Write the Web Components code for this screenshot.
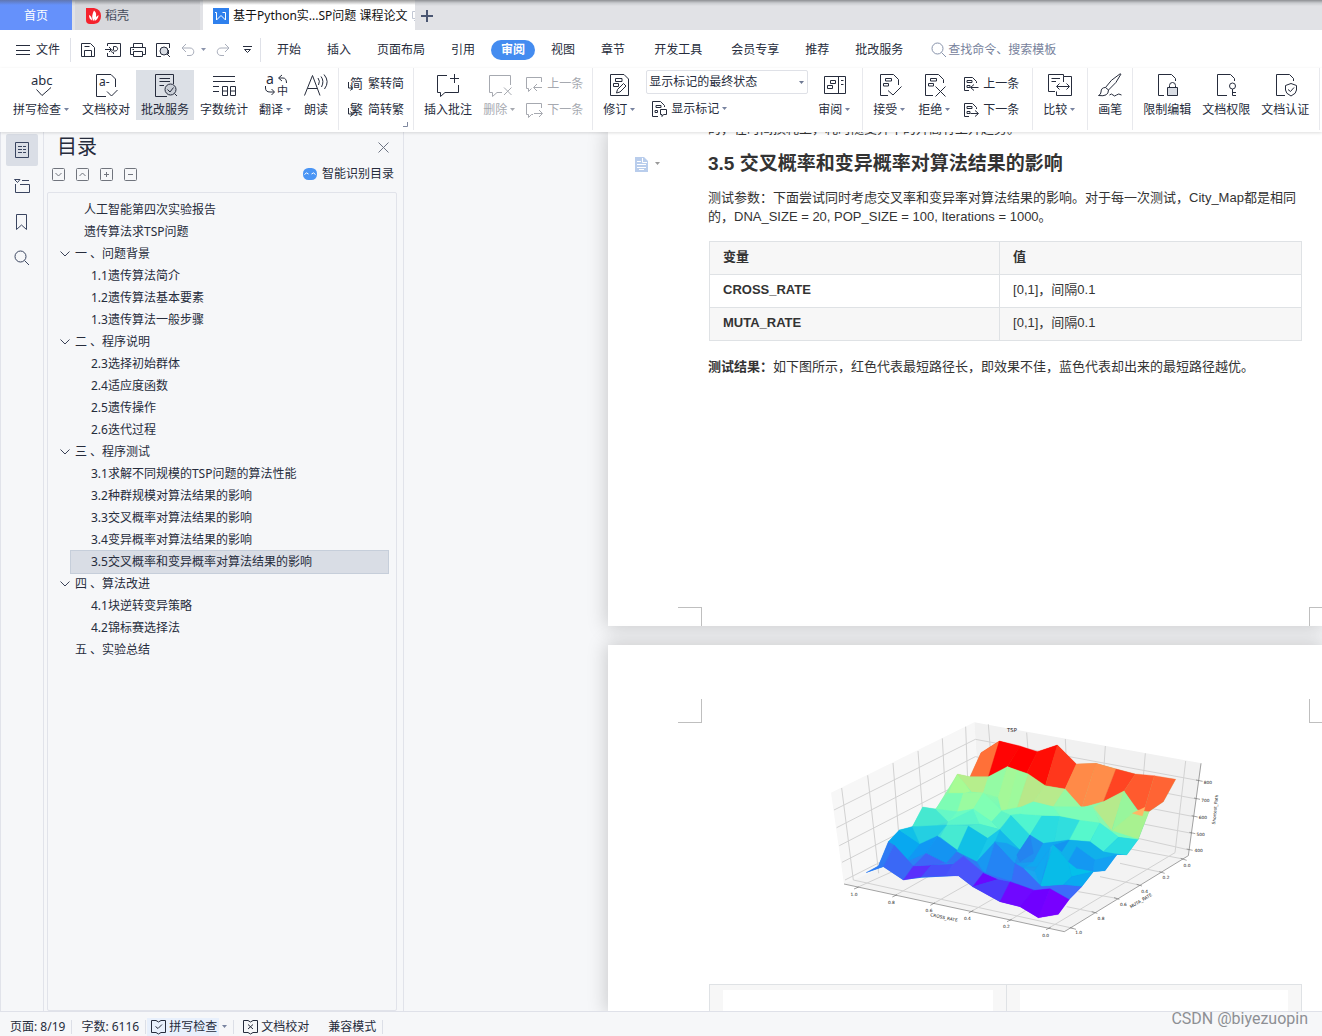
<!DOCTYPE html>
<html lang="zh-CN">
<head>
<meta charset="utf-8">
<title>基于Python实...SP问题 课程论文</title>
<style>
html,body{margin:0;height:100%}
body{font:12px/16px "Noto Sans","Noto Sans CJK SC",sans-serif;color:#262c3c;background:#f6f7f9}
</style>
</head>
<body>
<writer-app></writer-app>
<script>
const RESET=`*{box-sizing:border-box}button,input,select{font:inherit;color:inherit;background:none;border:0;margin:0;padding:0;outline:0}button{white-space:nowrap;cursor:pointer}svg{display:block;flex:none;overflow:visible}`;
function define(name,css,html,after){
  const t=document.createElement('template');
  t.innerHTML=`<style>${RESET}${css}</style>${html}`;
  customElements.define(name,class extends HTMLElement{
    constructor(){super();this.attachShadow({mode:'open'}).append(t.content.cloneNode(true));}
    connectedCallback(){if(after)after(this,this.shadowRoot);}
  });
}

/* name: [width, height, markup] */
const SMALLREV='<path d="M6 14.500H1.500V1.500H9.500L13.500 5.500V7M4 4.500H9V6.500H4ZM4 9.500H7V11.500H4Z"/>';
const ICONS={
 menu:[14,12,'<path d="M0 1.500H14M0 6.500H14M0 10.500H14"/>'],
 save:[16,16,'<path d="M1.500 14.500V1.500H10.500L14.500 5.500V14.500H1.500M4.500 14.500V8.500H11.500V14.500M4.500 4.500H9.500"/>'],
 exportp:[16,16,'<path d="M2.500 4V1.500H15.500V14.500H2.500V11M0 7.500H6M4 5L6.500 7.500 4 10M8.500 12V10.500C5 10.500 6.500 8 8.500 8V4.500H10C13.500 4.500 13.500 9 10 9H8.500"/>'],
 print:[16,16,'<path d="M3.500 5V1.500H12.500V5M3.500 12.500H.5V5.500H15.500V12.500H12.500M3.500 9.500H12.500V14.500H3.500ZM2.500 7.500H4"/>'],
 preview:[16,16,'<path d="M6 14.500H1.500V1.500H14.500V6"/><circle cx="9" cy="9" r="4" fill="#d9dde4"/><path d="M12 12L15 15M13.500 8V12"/>'],
 undo:[14,14,'<path d="M5 1L1 5 5 9M1 5H9C14 5 14 12.500 9 12.500H6"/>'],
 redo:[14,14,'<path d="M9 1L13 5 9 9M13 5H5C0 5 0 12.500 5 12.500H8"/>'],
 more:[9,9,'<path d="M0 1.500H9M1.500 4.500L4.500 7.500 7.500 4.500Z"/>'],
 search:[16,16,'<circle cx="6.500" cy="6.500" r="5.500"/><path d="M10.500 10.500L15 15"/>'],
 caret:[5,4,'<path d="M0 0H5L2.500 3Z" fill="currentColor" stroke="none"/>'],
 chev:[10,6,'<path d="M.5 .5L5 5 9.500 .5"/>'],
 abc:[24,24,'<text x="1" y="12" font-size="13">abc</text><path d="M6.500 16.500L12 22.500 21 14.500"/>'],
 proof:[24,24,'<path d="M12 23.500H2.500V1.500H17L21.500 6V14M13 18.500L17.500 23 23.500 17"/><text x="5" y="13" font-size="12">a-</text>'],
 service:[26,24,'<path d="M15 23.500H3.500V1.500H21.500V11M7.500 5.500H18M7.500 8.500H18M7.500 12.500H12"/><circle cx="18.500" cy="16.500" r="5.500" fill="#c9ced6"/><path d="M15.500 16.500L18 19 21.500 14.500M22.500 20.500L25 23"/>'],
 count:[24,24,'<path d="M1 3.500H23M1 8.500H23M1 13.500H7M1 18.500H7M10.500 13.500H15.500V22.500H10.500ZM10.500 18H15.500M18.500 13.500H23.500V22.500H18.500ZM18.500 18H23.500"/>'],
 trans:[24,24,'<text x="2" y="11" font-size="14">a</text><text x="13" y="22" font-size="11">中</text><path d="M18 2L14.500 5 18 8M15 5H19Q22.500 5 22.500 10M1.500 13V15Q1.500 19 6 19H10M7.500 16L10.500 19 7.500 22"/>'],
 read:[24,24,'<path d="M.5 22.500L8.500 2.500 16 22.500M3.500 15.500H13.500M14 5Q16.500 8 14.500 12M17 3.500Q20.500 8 17.500 14M20 1.500Q26 8.500 20.500 16"/>'],
 jian:[17,16,'<text x="3" y="12" font-size="13">简</text><path d="M1.500 6V12H5M3.500 9.500L5.500 12 3.500 14.500"/>'],
 fan:[17,16,'<text x="3" y="12" font-size="13">繁</text><path d="M1.500 6V12H5M3.500 9.500L5.500 12 3.500 14.500"/>'],
 addnote:[24,24,'<path d="M11 2.500H1.500V19.500H4.500V23.500L9 19.500H22.500V12M18.500 1V10M14 5.500H23"/>'],
 delnote:[24,24,'<path d="M22.500 12V2.500H1.500V19.500H4.500V23.500L9 19.500H14M16 14.500L23.500 22M23.500 14.500L16 22"/>'],
 prevnote:[17,16,'<path d="M15.500 6V1.500H.5V12.500H2.500V15.500L5.500 12.500M16 11.500H8M11 8L7.500 11.500 11 15"/>'],
 nextnote:[17,16,'<path d="M15.500 6V1.500H.5V12.500H2.500V15.500L5.500 12.500H7M8 11.500H16M13 8L16.500 11.500 13 15"/>'],
 track:[24,24,'<path d="M2.500 1.500H16L20.500 6V22.500H2.500ZM7.500 5.500H14V8.500H7.500ZM5.500 10.500H10.500V13.500H5.500ZM8.500 20L9.500 16.500 15.500 10.500 18 13 12 19Z"/>'],
 showmark:[16,16,'<path d="M7 15.500H1.500V.5H9.500L13.500 4.500V6M5 4.500H10V6.500H5ZM4 9.500H6.500V11.500H4ZM9.500 8.500H15.500V13.500H12.500L11 15.500V13.500H9.500Z"/>'],
 pane:[24,24,'<path d="M1.500 3.500H22.500V20.500H1.500ZM15.500 3.500V20.500M7.500 7.500H12.500V10.500H7.500ZM4.500 12.500H9.500V15.500H4.500ZM18 7.500H20.500M18 11.500H20.500"/>'],
 accept:[24,24,'<path d="M10 22.500H2.500V1.500H15.500L20.500 6.500V12M7.500 5.500H13.500V8H7.500ZM5.500 10.500H10.500V13H5.500ZM10 17.500L15 22 23.500 13.500"/>'],
 reject:[24,24,'<path d="M10 22.500H2.500V1.500H15.500L20.500 6.500V10M7.500 5.500H13.500V8H7.500ZM5.500 10.500H10.500V13H5.500ZM12.500 13.500L22.500 23.500M22.500 13.500L12.500 23.500"/>'],
 prevrev:[16,16,SMALLREV+'<path d="M15.500 11.500H8M11 8.500L7.500 11.500 11 14.500"/>'],
 nextrev:[16,16,SMALLREV+'<path d="M7.500 11.500H15M12 8.500L15.500 11.500 12 14.500"/>'],
 compare:[26,24,'<path d="M8 18.500H1.500V1.500H16.500V3.500M16.500 3.500H24.500V22.500H9.500V18.500M4.500 5.500H13M4.500 8.500H9M10 13.500H22M12.500 10.500L9.500 13.500 12.500 16.500M19.500 10.500L22.500 13.500 19.500 16.500M16.500 3.500V9"/>'],
 brush:[24,24,'<path d="M22.500 .5Q12 7 7.500 14.500L10.500 17Q19 10 23 1M7.500 14.500Q3 14.500 3 19Q3 21.500 .5 22.500Q10.500 24 10.500 17M11.500 22Q13.500 20 15 22T18.500 22T23.500 22"/>'],
 lock:[24,24,'<path d="M9 22.500H3.500V1.500H16.500L20.500 5.500V8M14.500 14V12.500Q14.500 9.500 17.500 9.500T20.500 12.500V14"/><path fill="#d9dde4" d="M12.500 14.500H22.500V22.500H12.500Z"/>'],
 key:[24,24,'<path d="M13 22.500H3.500V1.500H16.500L20.500 5.500V8M18.500 16V22.500H22M18.500 19.500H22"/><circle cx="18.500" cy="13" r="3"/>'],
 shield:[24,24,'<path d="M12 22.500H3.500V1.500H16.500L20.500 5.500V8M18 10.500L23.500 12.500V17Q23.500 20.500 18 23Q12.500 20.500 12.500 17V12.500ZM15 16.500L17.500 18.500 21 14.500"/>'],
 corner:[5,5,'<path d="M4.500 0V4.500H0"/>'],
 outline:[16,16,'<path d="M1.500 .5H14.500V15.500H1.500ZM4 4.500H8M9 4.500H12M4 7.500H8M9 7.500H12M4 10.500H8M9 10.500H12"/>'],
 chapter:[16,16,'<path d="M.5 1.500H6L3.500 4.500ZM8 2.500H15M1.500 6V14.500H15.500V6.500H6"/>'],
 bookmark:[16,16,'<path d="M2.500 .5H12.500V15.500L7.500 11 2.500 15.500Z"/>'],
 close:[11,11,'<path d="M.5 .5L10.500 10.500M10.500 .5L.5 10.500"/>'],
 boxdown:[13,13,'<rect x=".5" y=".5" width="12" height="12" rx="1"/><path d="M3.500 5L6.500 8 9.500 5"/>'],
 boxup:[13,13,'<rect x=".5" y=".5" width="12" height="12" rx="1"/><path d="M3.500 8L6.500 5 9.500 8"/>'],
 boxplus:[13,13,'<rect x=".5" y=".5" width="12" height="12" rx="1"/><path d="M4 6.500H9M6.500 4V9"/>'],
 boxminus:[13,13,'<rect x=".5" y=".5" width="12" height="12" rx="1"/><path d="M4 6.500H9"/>'],
 robot:[14,12,'<rect width="14" height="12" rx="5.500" fill="#4a95f5" stroke="none"/><path stroke="#fff" d="M1.500 6.500Q3.500 3.500 5.500 6M8.500 6Q10.500 3.500 12.500 6.500"/>'],
 docfile:[13,15,'<path d="M0 0H9L13 4V15H0Z" fill="#b9cdec" stroke="none"/><path stroke="#fff" d="M2 4.500H6M2 7.500H11M2 10.500H11M7.500 1V5.500H12M4 12.500H9"/>'],
 spellbook:[15,15,'<path d="M5 1.500H.5V13.500H5L7.500 15 10 13.500H14.500V1.500H10L7.500 3 5 1.500M4.500 7.500L7 9.500 11 5.500"/>'],
 proofbook:[15,15,'<path d="M5 1.500H.5V13.500H5L7.500 15 10 13.500H14.500V1.500H10L7.500 3 5 1.500M5 5.500L10 10M10 5.500L5 10"/>'],
 plus:[12,12,'<path d="M6 0V12M0 6H12" stroke-width="2"/>'],
 docer:[15,16,'<path d="M0 0H8Q15 1 15 8T8 16H4Q0 16 0 12Z" fill="#f5222d" stroke="none"/><path fill="#fff" stroke="none" d="M8 2.500Q12 6 9 11L7 13Q5 8 8 2.500M3 7Q6 8 6 12.500Q3 11 3 7M12.500 7Q12.500 11 8.500 13Q9 9 12.500 7"/>'],
 wps:[16,16,'<rect width="16" height="16" fill="#2f80ed" stroke="none"/><path stroke="#fff" d="M2 4.500H3.500V12L8 7.500 12.500 12V4.500H9.500"/>'],
 ghost:[5,10,'<path d="M5 .5H1.500V7.500H5M3 9.500H5"/>']
};
define('ui-icon',':host{display:block;flex:none}svg text{fill:currentColor;stroke:none}','<svg fill="none" stroke="currentColor" aria-hidden="true"></svg>',(el,r)=>{
  const [w,h,m]=ICONS[el.getAttribute('name')],s=r.querySelector('svg');
  s.setAttribute('width',w);s.setAttribute('height',h);s.setAttribute('viewBox',`0 0 ${w} ${h}`);s.innerHTML=m;
});

define('tab-strip',`
:host{display:flex;height:30px;background:linear-gradient(#8d8f93,#c9cbcf 3px,#e1e2e6 6px);align-items:stretch}
button{display:flex;align-items:center;padding-top:2px}
.home{width:72px;justify-content:center;background:linear-gradient(#6076b0,#6591fb 5px);color:#fff;margin-right:3px}
.docer{width:125px;padding-left:11px;gap:4px;background:linear-gradient(#8d8f93,#d7d8dc 5px);color:#444a5a;margin-right:3px}
.doc{width:212px;padding-left:10px;gap:4px;background:linear-gradient(#999,#fff 5px);color:#111;overflow:hidden}
.doc ui-icon:last-child{color:#c3c8d4}
.new{padding-left:6px;color:#4a5672}`,
`<button class="home">首页</button><button class="docer"><ui-icon name="docer"></ui-icon>稻壳</button><button class="doc"><ui-icon name="wps"></ui-icon>基于Python实...SP问题 课程论文<ui-icon name="ghost"></ui-icon></button><button class="new" aria-label="新建"><ui-icon name="plus"></ui-icon></button>`);

define('menu-bar',`
:host{display:flex;height:38px;background:#fff;align-items:center;padding:1px 0 0 16px}
.file{display:flex;gap:6px;align-items:center;padding-right:10px}
.sep{width:1px;height:24px;background:#dfe1e8}
.quick{display:flex;align-items:center;gap:9px;padding:0 8px 0 9px}
.quick button.dim{color:#a9aebb}
.quick .more{margin-left:4px}
.undo{display:flex;align-items:center;gap:6px;margin:0 1px}
.undo ui-icon+ui-icon{color:#8a93ab}
nav{display:flex;align-items:center;margin-left:3px}
nav button{height:20px;padding:0 10px;margin:0 3px;line-height:20px}
nav .wide{margin:0 3px 0 6px}
nav .on{background:#448cf0;color:#fff;font-weight:bold;border-radius:10px}
label{display:flex;align-items:center;gap:1px;margin-left:15px;color:#8893ab;flex:1}
input{flex:1;min-width:108px}
input::placeholder{color:#77829c;opacity:1}`,
`<button class="file"><ui-icon name="menu"></ui-icon>文件</button><span class="sep"></span>
<div class="quick"><button aria-label="保存"><ui-icon name="save"></ui-icon></button><button aria-label="输出"><ui-icon name="exportp"></ui-icon></button><button aria-label="打印"><ui-icon name="print"></ui-icon></button><button aria-label="预览"><ui-icon name="preview"></ui-icon></button><button class="dim undo" aria-label="撤销"><ui-icon name="undo"></ui-icon><ui-icon name="caret"></ui-icon></button><button class="dim" aria-label="恢复"><ui-icon name="redo"></ui-icon></button><button class="more" aria-label="更多"><ui-icon name="more"></ui-icon></button></div><span class="sep"></span>
<nav><button>开始</button><button>插入</button><button>页面布局</button><button>引用</button><button class="on">审阅</button><button>视图</button><button>章节</button><button class="wide">开发工具</button><button class="wide">会员专享</button><button>推荐</button><button>批改服务</button></nav>
<label><ui-icon name="search"></ui-icon><input type="text" aria-label="查找命令、搜索模板" placeholder="查找命令、搜索模板"></label>`);

define('ribbon-button',`
:host{display:block}
button{display:flex;flex-direction:column;align-items:center;gap:5px;height:50px;padding:3px 5px 0}
:host([active]) button{background:#dce0e6}
:host([disabled]){color:#a6a9b0}
.l{display:flex;align-items:center;gap:3px}
.l ui-icon{display:none;color:#7883a0;margin-right:2px}
:host([drop]) .l ui-icon{display:block}
:host([small]) button{flex-direction:row;gap:4px;height:26px;padding:0}
:host([disabled]) .l ui-icon{color:#a6a9b0}`,
`<button><ui-icon class="i" name="caret"></ui-icon><span class="l"><slot></slot><ui-icon name="caret"></ui-icon></span></button>`,
(el,r)=>{const n=document.createElement('ui-icon');n.setAttribute('name',el.getAttribute('icon'));r.querySelector('.i').replaceWith(n);if(el.hasAttribute('disabled'))r.querySelector('button').disabled=true;});

define('ribbon-group',`:host{display:flex;gap:1px;padding:2px 5px 0;height:62px;border-right:1px solid #e8e9ed;position:relative;flex:none}
ui-icon{display:none}:host([launcher]) ui-icon{display:block;position:absolute;right:5px;bottom:3px;color:#7f889f}`,`<slot></slot><ui-icon name="corner"></ui-icon>`);
define('ribbon-stack',`:host{display:flex;flex-direction:column;padding:1px 4px 0 3px}:host([wide]){padding:1px 8px 0 5px}`,`<slot></slot>`);
define('mark-select',`:host{display:flex;flex-direction:column;padding:0 4px 0 3px}
.box{position:relative;height:24px;display:flex;align-items:center}
select{appearance:none;width:162px;height:24px;border:1px solid #dfe1e7;border-radius:2px;padding-left:2px;background:#fff}
.box ui-icon{position:absolute;right:4px;top:11px;color:#6e7993}
.low{padding:2px 0 0 5px}`,
`<div class="box"><select aria-label="显示标记状态"><option>显示标记的最终状态</option></select><ui-icon name="caret"></ui-icon></div><div class="low"><slot></slot></div>`);

define('ribbon-bar',`:host{display:flex;height:64px;background:#fff;padding-left:3px;overflow:hidden;position:relative;z-index:2;box-shadow:0 1px 3px #0002;flex:none}`,
`<ribbon-group><ribbon-button icon="abc" drop>拼写检查</ribbon-button><ribbon-button icon="proof">文档校对</ribbon-button><ribbon-button icon="service" active>批改服务</ribbon-button><ribbon-button icon="count">字数统计</ribbon-button><ribbon-button icon="trans" drop>翻译</ribbon-button><ribbon-button icon="read">朗读</ribbon-button></ribbon-group>
<ribbon-group launcher><ribbon-stack><ribbon-button icon="jian" small>繁转简</ribbon-button><ribbon-button icon="fan" small>简转繁</ribbon-button></ribbon-stack></ribbon-group>
<ribbon-group><ribbon-button icon="addnote">插入批注</ribbon-button><ribbon-button icon="delnote" drop disabled>删除</ribbon-button><ribbon-stack><ribbon-button icon="prevnote" small disabled>上一条</ribbon-button><ribbon-button icon="nextnote" small disabled>下一条</ribbon-button></ribbon-stack></ribbon-group>
<ribbon-group><ribbon-button icon="track" drop>修订</ribbon-button><mark-select><ribbon-button icon="showmark" small drop>显示标记</ribbon-button></mark-select><ribbon-button icon="pane" drop>审阅</ribbon-button></ribbon-group>
<ribbon-group><ribbon-button icon="accept" drop>接受</ribbon-button><ribbon-button icon="reject" drop>拒绝</ribbon-button><ribbon-stack wide><ribbon-button icon="prevrev" small>上一条</ribbon-button><ribbon-button icon="nextrev" small>下一条</ribbon-button></ribbon-stack></ribbon-group>
<ribbon-group><ribbon-button icon="compare" drop>比较</ribbon-button></ribbon-group>
<ribbon-group><ribbon-button icon="brush">画笔</ribbon-button></ribbon-group>
<ribbon-group><ribbon-button icon="lock">限制编辑</ribbon-button><ribbon-button icon="key">文档权限</ribbon-button><ribbon-button icon="shield">文档认证</ribbon-button></ribbon-group>`);

define('side-rail',`:host{display:flex;flex-direction:column;gap:4px;width:44px;padding:2px 0 0 5px;border:solid #e1e3ea;border-width:0 1px;flex:none;color:#3a4560}
button{width:32px;height:32px;display:flex;align-items:center;justify-content:center;border-radius:2px}
.on{background:#dadee6}`,
`<button class="on" aria-label="目录"><ui-icon name="outline"></ui-icon></button><button aria-label="章节"><ui-icon name="chapter"></ui-icon></button><button aria-label="书签"><ui-icon name="bookmark"></ui-icon></button><button aria-label="查找"><ui-icon name="search"></ui-icon></button>`);

define('toc-item',`:host{display:block;height:22px}
button{display:flex;align-items:center;width:100%;height:22px;gap:5px;padding-left:12px;text-align:left}
ui-icon{visibility:hidden;color:#3a4257}
:host([open]) ui-icon{visibility:visible}
:host([level="0"]) ui-icon,:host([level="2"]) ui-icon{display:none}
:host([level="0"]) button{padding-left:36px}
:host([level="2"]){margin:0 8px 0 23px}
:host([level="2"]) button{padding-left:20px}
:host([selected]) button{background:#d9dde5;outline:1px solid #c6ceda}`,
`<button><ui-icon name="chev"></ui-icon><span><slot></slot></span></button>`);

define('toc-panel',`:host{display:flex;flex-direction:column;width:360px;border-right:1px solid #e1e3ea;padding:0 6px 0 3px;flex:none}
header{display:flex;justify-content:space-between;align-items:center;height:30px;padding:0 8px 0 10px}
h2{font-size:20px;line-height:30px;font-weight:normal;margin:0}
header ui-icon{color:#6c7383}
.tools{display:flex;align-items:center;gap:11px;height:24px;padding:0 3px 0 5px;color:#70747d;margin-bottom:6px}
.smart{margin-left:auto;display:flex;align-items:center;gap:5px;color:#262c3c}
.list{flex:1;min-height:0;overflow:hidden;border:1px solid #e1e3ea;border-radius:2px;padding-top:6px}`,
`<header><h2>目录</h2><button aria-label="关闭"><ui-icon name="close"></ui-icon></button></header>
<div class="tools"><button aria-label="展开"><ui-icon name="boxdown"></ui-icon></button><button aria-label="收起"><ui-icon name="boxup"></ui-icon></button><button aria-label="增加"><ui-icon name="boxplus"></ui-icon></button><button aria-label="减少"><ui-icon name="boxminus"></ui-icon></button><button class="smart"><ui-icon name="robot"></ui-icon>智能识别目录</button></div>
<div class="list">
<toc-item level="0">人工智能第四次实验报告</toc-item><toc-item level="0">遗传算法求TSP问题</toc-item>
<toc-item level="1" open>一 、问题背景</toc-item><toc-item level="2">1.1遗传算法简介</toc-item><toc-item level="2">1.2遗传算法基本要素</toc-item><toc-item level="2">1.3遗传算法一般步骤</toc-item>
<toc-item level="1" open>二 、程序说明</toc-item><toc-item level="2">2.3选择初始群体</toc-item><toc-item level="2">2.4适应度函数</toc-item><toc-item level="2">2.5遗传操作</toc-item><toc-item level="2">2.6迭代过程</toc-item>
<toc-item level="1" open>三 、程序测试</toc-item><toc-item level="2">3.1求解不同规模的TSP问题的算法性能</toc-item><toc-item level="2">3.2种群规模对算法结果的影响</toc-item><toc-item level="2">3.3交叉概率对算法结果的影响</toc-item><toc-item level="2">3.4变异概率对算法结果的影响</toc-item><toc-item level="2" selected>3.5交叉概率和变异概率对算法结果的影响</toc-item>
<toc-item level="1" open>四 、算法改进</toc-item><toc-item level="2">4.1块逆转变异策略</toc-item><toc-item level="2">4.2锦标赛选择法</toc-item><toc-item level="1">五 、实验总结</toc-item>
</div>`);

/* Facets of the surface, back to front */
const FACETS=`ff7038 450,200 483,128 538,93 505,200
ff0404 505,200 538,93 600,108 562,170
ff0000 562,170 600,108 652,125 620,190
ff0d05 652,125 712,105 676,227 620,190
ff371c 712,105 769,162 735,237 676,227
ff8a48 769,162 828,160 785,293 735,237
ff8d4a 828,160 888,177 850,275 785,293
ff4422 888,177 946,192 912,243 850,275
ff5a2e 946,192 1003,197 967,318 912,243
ff6434 1003,197 1067,208 1030,275 967,318
a8fb94 412,192 450,244 430,250 385,250
b6ee8c 412,192 450,200 505,200 490,248 455,245
7dfcb4 385,250 430,250 412,305 347,297
9afba0 430,250 490,248 460,297 412,305
80ffb4 490,248 545,302 515,335 460,297
94fba4 505,200 562,170 535,262 490,248
9efa9c 562,170 625,192 590,298 545,302 535,262
a4f898 562,170 590,182 560,300 545,302 535,262
b8e88a 625,192 676,227 640,275 590,298
b8ea8c 676,227 735,237 700,290 640,275
96f8a2 735,237 785,293 700,290
8efaa8 785,293 850,275 818,300 700,290
b6ea8c 850,275 912,243 875,362 818,295
98f69c 912,243 950,300 895,350 875,362
a8f290 950,300 987,305 955,388 895,380 875,362
ffb664 937,310 975,292 967,318
46e8d0 308,291 347,297 385,330 330,358 277,350
66f8c6 347,297 412,305 385,335
6cfcc2 412,305 460,297 385,335
5cf5ca 385,335 460,297 478,342 380,345
3adcdc 330,358 380,345 360,380 300,402
46ead2 380,345 445,348 415,423 360,380
6afcc4 460,297 515,335 538,358 478,342
4aecd0 445,348 478,342 538,358 503,385
5ef5c6 515,335 545,302 573,315 538,358
72fdbe 545,302 605,290 605,312 573,315
26d8e0 573,315 630,375 600,420 540,360
50f5d0 573,315 605,312 665,318 630,375
2adce0 665,318 720,318 700,405 690,415 630,375
30dede 720,318 780,330 748,390 700,405
56f8cc 780,330 840,338 810,395 748,390
46f0d8 840,338 897,380 850,425 810,395
2adce0 897,380 955,388 920,435 850,425
70fdc0 605,290 640,275 700,290 720,318 605,312
7cfcb8 700,290 818,290 840,338 780,330 720,318
88f8b0 818,290 875,362 897,380 840,338
74fcba 875,362 955,388 897,380
08a8f0 238,360 300,402 255,458 222,405 205,395
10c0e8 238,360 277,350 330,358 300,402
24cfe2 277,350 380,345 352,378 300,402
1098f4 300,402 352,378 318,430 255,458
1494f2 352,378 415,423 378,460 318,430
10c0e6 445,348 503,385 470,455 410,425
18c8e8 503,385 540,358 560,400 525,395 470,455
14b8ea 540,360 600,420 575,425 525,395
1898f2 470,455 525,395 497,490
2484f4 525,395 585,460 575,515 497,490
18a0f0 560,400 600,420 585,460 525,395
2090f0 600,420 630,375 670,400 640,455 585,460
2484f0 630,375 640,430 600,455 590,435
10a8f0 670,400 745,390 700,405 690,415 660,530 610,475 640,455
1ca0ee 640,485 690,415 650,470 610,470
10b0ea 748,390 810,395 850,425 890,435 825,450 770,410 745,455 700,405
1494f0 700,405 748,390 725,425
08bce8 700,405 745,455 755,500 730,525 660,530
04c0ea 745,455 770,475 820,485 755,500
1498f2 745,455 770,410 825,450 815,480 770,475
14a0f2 825,450 890,435 855,482 820,485
0aaaf0 730,525 755,500 820,485 785,530
1aa8f0 610,475 645,485 660,530
2f7af4 138,488 175,468 205,395 222,405 190,470
2a84f4 222,405 255,458 318,430 280,468
3a68f6 222,405 280,468 250,510 190,470
5a30fc 280,468 335,465 305,500 250,510
3e66f8 318,430 378,460 335,465 280,468
4650fa 335,465 400,462 378,495 415,497 305,500
2f78f4 378,460 410,425 430,438 400,462
2f7cf4 410,425 470,455 490,488 430,438
4a54fa 430,438 490,488 458,530 415,497 378,495 400,462
6a08ff 490,488 535,508 458,530
4a3cfa 458,530 535,508 570,515 540,575
3a6cf8 490,488 575,515 535,508
386ef8 585,460 610,475 665,530 640,540 575,515
7008ff 570,515 640,540 600,590 540,575
7000ff 640,540 690,535 655,623 600,590
7800ff 690,535 748,568 715,613 655,623
3c6cfa 640,540 660,530 730,525 785,530 748,568 690,535`;
const line=(a)=>a.map(p=>`M${p[0]} ${p[1]}L${p[2]} ${p[3]}`).join('');
const label=(a)=>a.map(p=>`<text x="${p[1]}" y="${p[2]+5}">${p[0]}</text>`).join('');
define('surface-plot',`:host{display:block}text{font:13px "DejaVu Sans",sans-serif;fill:#222;text-anchor:middle}`,
`<svg width="410" height="240" viewBox="0 0 1230 720" role="img" aria-label="TSP">
<defs><linearGradient id="g" x1="0" y1="93" x2="0" y2="623" gradientUnits="userSpaceOnUse"><stop offset="0" stop-color="#f20"/><stop offset=".22" stop-color="#a0f898"/><stop offset=".4" stop-color="#70fcc0"/><stop offset=".55" stop-color="#18c0e8"/><stop offset=".72" stop-color="#1898f2"/><stop offset="1" stop-color="#7000ff"/></linearGradient></defs>
<path fill="#f7f7f7" d="M33 248L463 37 485 395 72 522Z"/><path fill="#f1f1f1" d="M463 37L1145 160 1105 437 485 380Z"/><path fill="#f3f3f3" d="M72 522L480 350 1105 437 733 665Z"/>
<path fill="none" stroke="#d2d2d2" stroke-width="3" d="${line([[65,234,100,510],[143,196,176,490],[219,159,244,470],[294,123,318,440],[367,85,385,420],[437,50,450,400],[42,300,466,88],[50,353,466,140],[58,407,470,195],[66,457,470,250],[75,510,470,310],[466,88,1138,212],[466,140,1130,267],[600,220,1122,320],[700,290,1115,370],[800,350,1108,420],[505,43,512,130],[620,68,624,120],[736,87,738,130],[856,108,852,170],[976,130,970,200],[1097,153,1065,428],[110,533,250,470],[224,557,360,480],[338,582,500,490],[453,605,600,520],[568,632,700,550],[685,655,1065,428],[100,510,760,655],[823,607,740,590],[890,565,775,545],[958,525,840,500],[1025,487,900,460],[1090,447,920,415]])}"/>
<path fill="none" stroke="#777" stroke-width="2" d="M72 522L733 665 1105 437 1143 160${line([[102,537,116,531],[217,561,231,554],[331,586,345,578],[446,609,460,601],[561,635,575,628],[678,659,692,652],[750,653,768,658],[815,605,832,610],[882,563,898,568],[950,523,966,528],[1018,485,1034,490],[1082,445,1100,451],[1128,210,1148,214],[1122,264,1140,268],[1115,317,1133,321],[1108,367,1126,371],[1100,417,1118,421]])}"/>
<path fill="url(#g)" d="M138 488L175 468 205 395 238 360 277 350 308 291 347 297 412 192 450 200 483 128 538 93 652 125 712 105 769 162 828 160 946 192 1067 208 1030 275 987 305 955 388 920 435 890 435 855 482 820 485 785 530 748 568 715 613 655 623 600 590 540 575 458 530 415 497 305 503 250 510 190 470Z"/>
${FACETS.split('\n').map(l=>{const i=l.indexOf(' '),c='#'+l.slice(0,i);return `<polygon points="${l.slice(i+1)}" fill="${c}" stroke="${c}"/>`}).join('')}
${label([['1.0',102,552],['0.8',214,576],['0.6',327,600],['0.4',442,625],['0.2',559,650],['0.0',677,676],['0.0',1101,465],['0.2',1038,503],['0.4',974,543],['0.6',910,583],['0.8',843,625],['1.0',776,667],['800',1164,216],['700',1156,270],['600',1149,322],['500',1142,373],['400',1136,422]])}
<text x="576" y="67" style="font-size:16px">TSP</text><text transform="translate(371 627) rotate(12)">CROSS_RATE</text><text transform="translate(965 576) rotate(-31)">MUTA_RATE</text><text transform="translate(1190 299) rotate(-84)">Shortest_Path</text></svg>`);

define('crop-marks',`:host{display:flex;justify-content:space-between;height:24px;padding-left:70px;flex:none}
i{border:0 solid #bfbfbf;width:24px}
.l{border-right-width:1px}.r{width:13px;border-left-width:1px}
:host([at=top]) i{border-bottom-width:1px}
:host([at=bottom]){height:19px}
:host([at=bottom]) i{border-top-width:1px}`,`<i class="l"></i><i class="r"></i>`);

define('doc-page',`:host{display:flex;flex-direction:column;background:#fff;box-shadow:0 0 18px 2px #0000002e}`,`<slot></slot>`);

define('doc-canvas',`:host{display:flex;flex-direction:column;gap:19px;flex:1;min-width:0;overflow:hidden;padding-left:204px;font-family:"Liberation Sans","Noto Sans CJK SC",sans-serif;font-size:13px;line-height:19px;color:#333}
.first{height:494px;flex:none}
.second{flex:1;padding-top:54px;min-height:0}
.text{flex:1;padding:0 20px 0 100px}
p{margin:0}
.cut{margin-top:-13px}
.head{display:flex;align-items:center;margin:14px 0 12px -73px}
.tag{display:flex;align-items:center;gap:7px;width:73px;color:#999}
h3{margin:0;font-size:19px;line-height:24px}
table{border-collapse:collapse;width:calc(100% - 1px);margin:15px 0 16px 1px;table-layout:fixed}
th,td{border:1px solid #dfe2e5;height:33px;padding:0 13px 3px;text-align:left}
th:first-child{width:49%}
tr:nth-child(odd){background:#f7f7f7}
surface-plot{margin:-13px 0 0 212px}
.pics{display:grid;grid-template-columns:1fr 1fr;margin:34px 20px 0 101px;border:1px solid #dfe2e5;border-bottom:0;background:#f7f7f7;flex:1;min-height:0}
.pics div{padding:5px 13px 0;display:flex}
.pics div+div{border-left:1px solid #dfe2e5}
.pics i{flex:1;background:#fff}`,
`<doc-page class="first"><div class="text"><p class="cut">的，在时间损耗上，耗时随变异率的升高有上升趋势。</p>
<div class="head"><span class="tag"><ui-icon name="docfile"></ui-icon><ui-icon name="caret"></ui-icon></span><h3>3.5 交叉概率和变异概率对算法结果的影响</h3></div>
<p>测试参数：下面尝试同时考虑交叉率和变异率对算法结果的影响。对于每一次测试，City_Map都是相同的，DNA_SIZE = 20, POP_SIZE = 100, Iterations = 1000。</p>
<table><tr><th>变量</th><th>值</th></tr><tr><td><b>CROSS_RATE</b></td><td>[0,1]，间隔0.1</td></tr><tr><td><b>MUTA_RATE</b></td><td>[0,1]，间隔0.1</td></tr></table>
<p><b>测试结果：</b>如下图所示，红色代表最短路径长，即效果不佳，蓝色代表却出来的最短路径越优。</p></div><crop-marks at="bottom"></crop-marks></doc-page>
<doc-page class="second"><crop-marks at="top"></crop-marks><surface-plot></surface-plot><div class="pics"><div><i></i></div><div><i></i></div></div></doc-page>`);

define('status-bar',`:host{display:flex;align-items:center;height:25px;border-top:1px solid #dfe1e9;background:#f6f7f9;padding:5px 0 0 10px;position:relative;z-index:3;flex:none}
button,span{display:flex;align-items:center;gap:3px;height:18px;white-space:nowrap}
.sep{width:1px;height:14px;background:#dcdfe7;margin:0 9px 0 6px}
.tight{margin-right:1px}
.spell{background:#e8f0fc;padding:0 2px 0 4px;margin-right:3px}
.mode{margin-left:19px}
.caret{color:#7883a0}
.mark{position:absolute;right:14px;bottom:8px;font:16px/20px Roboto,sans-serif;color:#8d8f94}`,
`<span>页面: 8/19</span><i class="sep"></i><span>字数: 6116</span><i class="sep tight"></i><button class="spell"><ui-icon name="spellbook"></ui-icon>拼写检查</button><ui-icon class="caret" name="caret"></ui-icon><i class="sep"></i><button><ui-icon name="proofbook"></ui-icon>文档校对</button><span class="mode">兼容模式</span><i class="sep"></i><span class="mark">CSDN @biyezuopin</span>`);

define('writer-app',`:host{display:flex;flex-direction:column;height:100vh;overflow:hidden}main{display:flex;flex:1;min-height:0}`,
`<tab-strip></tab-strip><menu-bar></menu-bar><ribbon-bar></ribbon-bar><main><side-rail></side-rail><toc-panel></toc-panel><doc-canvas></doc-canvas></main><status-bar></status-bar>`);
</script>
</body>
</html>
